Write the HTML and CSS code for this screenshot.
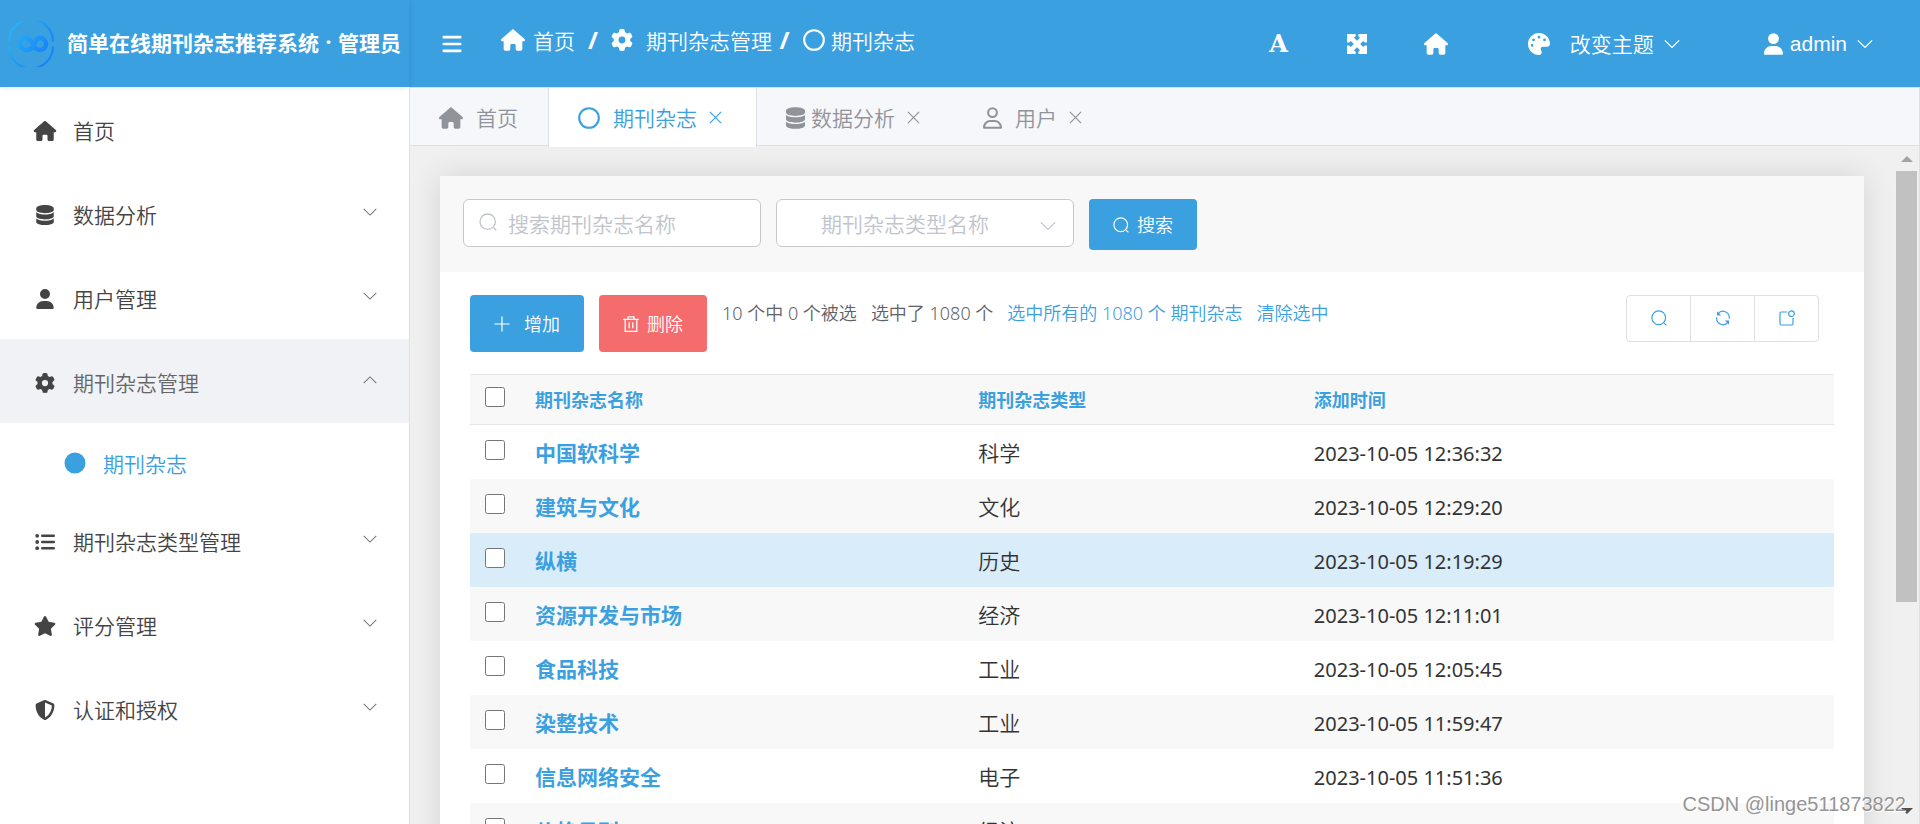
FILE: index.html
```html
<!DOCTYPE html>
<html lang="zh-CN">
<head>
<meta charset="utf-8">
<title>简单在线期刊杂志推荐系统</title>
<link rel="stylesheet" href="styles.css">
</head>
<body>
<svg class="sprite" aria-hidden="true">
  <symbol id="house" viewBox="0 0 576 512"><path d="M575.8 255.5c0 18-15 32.1-32 32.1h-32l.7 160.2c0 2.7-.2 5.4-.5 8.1V472c0 22.1-17.9 40-40 40H456c-1.1 0-2.2 0-3.3-.1c-1.4 .1-2.8 .1-4.2 .1H416 392c-22.1 0-40-17.9-40-40V448 384c0-17.7-14.3-32-32-32H256c-17.7 0-32 14.3-32 32v64 24c0 22.1-17.9 40-40 40H160 128.1c-1.5 0-3-.1-4.5-.2c-1.2 .1-2.4 .2-3.6 .2H104c-22.1 0-40-17.9-40-40V360c0-.9 0-1.9 .1-2.8V287.6H32c-18 0-32-14-32-32.1c0-9 3-17 10-24L266.4 8c7-7 15-8 22-8s15 2 21 7L564.8 231.5c8 7 12 15 11 24z"/></symbol>
  <symbol id="database" viewBox="0 0 448 512"><path d="M448 80v48c0 44.2-100.3 80-224 80S0 172.2 0 128V80C0 35.8 100.3 0 224 0S448 35.8 448 80zM393.2 214.7c20.8-7.4 39.9-16.9 54.8-28.6V288c0 44.2-100.3 80-224 80S0 332.2 0 288V186.1c14.9 11.8 34 21.2 54.8 28.6C99.7 230.7 159.5 240 224 240s124.3-9.3 169.2-25.3zM0 346.1c14.9 11.8 34 21.2 54.8 28.6C99.7 390.7 159.5 400 224 400s124.3-9.3 169.2-25.3c20.8-7.4 39.9-16.9 54.8-28.6V432c0 44.2-100.3 80-224 80S0 476.2 0 432V346.1z"/></symbol>
  <symbol id="user" viewBox="0 0 448 512"><path d="M224 256A128 128 0 1 0 224 0a128 128 0 1 0 0 256zm-45.7 48C79.8 304 0 383.8 0 482.3C0 498.7 13.3 512 29.7 512H418.3c16.4 0 29.7-13.3 29.7-29.7C448 383.8 368.2 304 269.7 304H178.3z"/></symbol>
  <symbol id="user-line" viewBox="0 0 448 512"><path d="M304 128a80 80 0 1 0 -160 0 80 80 0 1 0 160 0zM96 128a128 128 0 1 1 256 0A128 128 0 1 1 96 128zM49.3 464H398.7c-8.9-63.3-63.3-112-129-112H178.3c-65.7 0-120.1 48.7-129 112zM0 482.3C0 383.8 79.8 304 178.3 304h91.4C368.2 304 448 383.8 448 482.3c0 16.4-13.3 29.7-29.7 29.7H29.7C13.3 512 0 498.7 0 482.3z"/></symbol>
  <symbol id="gear" viewBox="0 0 512 512"><path d="M495.9 166.6c3.2 8.7 .5 18.4-6.4 24.6l-43.3 39.4c1.1 8.3 1.7 16.8 1.7 25.4s-.6 17.1-1.7 25.4l43.3 39.4c6.9 6.2 9.6 15.9 6.4 24.6c-4.4 11.9-9.7 23.3-15.8 34.3l-4.7 8.1c-6.6 11-14 21.4-22.1 31.2c-5.9 7.2-15.7 9.6-24.5 6.8l-55.7-17.7c-13.4 10.3-28.2 18.9-44 25.4l-12.5 57.1c-2 9.1-9 16.3-18.2 17.8c-13.8 2.3-28 3.5-42.5 3.5s-28.7-1.2-42.5-3.5c-9.2-1.5-16.2-8.7-18.2-17.8l-12.5-57.1c-15.8-6.5-30.6-15.1-44-25.4L83.1 425.9c-8.8 2.8-18.6 .3-24.5-6.8c-8.1-9.8-15.5-20.2-22.1-31.2l-4.7-8.1c-6.1-11-11.4-22.4-15.8-34.3c-3.2-8.7-.5-18.4 6.4-24.6l43.3-39.4C64.6 273.1 64 264.6 64 256s.6-17.1 1.7-25.4L22.4 191.2c-6.9-6.2-9.6-15.9-6.4-24.6c4.4-11.9 9.7-23.3 15.8-34.3l4.7-8.1c6.6-11 14-21.4 22.1-31.2c5.9-7.2 15.7-9.6 24.5-6.8l55.7 17.7c13.4-10.3 28.2-18.9 44-25.4l12.5-57.1c2-9.1 9-16.3 18.2-17.8C227.3 1.2 241.5 0 256 0s28.7 1.2 42.5 3.5c9.2 1.5 16.2 8.7 18.2 17.8l12.5 57.1c15.8 6.5 30.6 15.1 44 25.4l55.7-17.7c8.8-2.8 18.6-.3 24.5 6.8c8.1 9.8 15.5 20.2 22.1 31.2l4.7 8.1c6.1 11 11.4 22.4 15.8 34.3zM256 336a80 80 0 1 0 0-160 80 80 0 1 0 0 160z"/></symbol>
  <symbol id="star" viewBox="0 0 576 512"><path d="M316.9 18C311.6 7 300.4 0 288.1 0s-23.4 7-28.8 18L195 150.3 51.4 171.5c-12 1.8-22 10.2-25.7 21.7s-.7 24.2 7.9 32.7L137.8 329 113.2 474.7c-2 12 3 24.2 12.9 31.3s23 8 33.8 2.3l128.3-68.5 128.3 68.5c10.8 5.7 23.9 4.9 33.8-2.3s14.9-19.3 12.9-31.3L438.5 329 542.7 225.9c8.6-8.5 11.7-21.2 7.9-32.7s-13.7-19.9-25.7-21.7L381.2 150.3 316.9 18z"/></symbol>
  <symbol id="shield" viewBox="0 0 512 512"><path d="M256 0c4.6 0 9.2 1 13.4 2.9L457.7 82.8c22 9.3 38.4 31 38.3 57.2c-.5 99.2-41.3 280.7-213.6 363.2c-16.7 8-36.1 8-52.8 0C57.3 420.7 16.5 239.2 16 140c-.1-26.2 16.3-47.9 38.3-57.2L242.7 2.9C246.8 1 251.4 0 256 0zm0 66.8V444.8C394 378 431.1 230.1 432 141.4L256 66.8z"/></symbol>
  <symbol id="palette" viewBox="0 0 512 512"><path d="M512 256c0 .9 0 1.8 0 2.7c-.4 36.5-33.6 61.3-70.1 61.3H344c-26.5 0-48 21.5-48 48c0 3.4 .4 6.7 1 9.9c2.1 10.2 6.5 20 10.8 29.9c6.1 13.8 12.1 27.5 12.1 42c0 31.8-21.6 60.7-53.4 62c-3.5 .1-7 .2-10.6 .2C114.6 512 0 397.4 0 256S114.6 0 256 0S512 114.6 512 256zM128 288a32 32 0 1 0 -64 0 32 32 0 1 0 64 0zm0-96a32 32 0 1 0 0-64 32 32 0 1 0 0 64zM288 96a32 32 0 1 0 -64 0 32 32 0 1 0 64 0zm96 96a32 32 0 1 0 0-64 32 32 0 1 0 0 64z"/></symbol>
  <symbol id="list" viewBox="0 0 20 20"><circle cx="2.2" cy="3.8" r="1.9"/><circle cx="2.2" cy="10" r="1.9"/><circle cx="2.2" cy="16.2" r="1.9"/><path d="M7.2 3.8H18.8M7.2 10H18.8M7.2 16.2H18.8" fill="none" stroke="currentColor" stroke-width="2.4" stroke-linecap="round"/></symbol>
  <symbol id="bars" viewBox="0 0 20 20"><path d="M1.8 3.2H18.2M1.8 10H18.2M1.8 16.8H18.2" fill="none" stroke="currentColor" stroke-width="2.7" stroke-linecap="round"/></symbol>
  <symbol id="expand" viewBox="0 0 20 20"><path d="M0 0h8.6v2.2L7 3.8 10 6.8 13 3.8 11.400 2.200V0H20v8.600h-2.200L16.200 7l-3 3 3 3 1.600-1.600H20V20h-8.600v-2.200l1.600-1.600-3-3-3 3 1.600 1.600V20H0v-8.600h2.200L3.800 13l3-3-3-3-1.600 1.600H0z"/></symbol>
  <symbol id="ring" viewBox="0 0 22 22"><circle cx="11" cy="11" r="9.800" fill="none" stroke="currentColor" stroke-width="2.100"/></symbol>
  <symbol id="disc" viewBox="0 0 22 22"><circle cx="11" cy="11" r="10.500"/></symbol>
  <symbol id="chevron" viewBox="0 0 16 16"><path d="M.8 4.300 8 11.500l7.200-7.200" fill="none" stroke="currentColor" stroke-width="1.200"/></symbol>
  <symbol id="close" viewBox="0 0 14 14"><path d="M1 1l12 12M13 1 1 13" fill="none" stroke="currentColor" stroke-width="1.200"/></symbol>
  <symbol id="search" viewBox="0 0 18 18"><path d="M14.700 14.700 17.300 17.300M16.400 8.700a7.700 7.700 0 1 1-15.400 0 7.700 7.700 0 0 1 15.400 0z" fill="none" stroke="currentColor" stroke-width="1.300"/></symbol>
  <symbol id="plus" viewBox="0 0 16 16"><path d="M8 .5v15M.5 8h15" fill="none" stroke="currentColor" stroke-width="1.200"/></symbol>
  <symbol id="trash" viewBox="0 0 16 16"><path d="M.2 3.400h15.600M5 3.400V.9h6v2.500M2.200 3.400v12h11.600v-12M6.200 6.300v6M9.800 6.300v6" fill="none" stroke="currentColor" stroke-width="1.300"/></symbol>
  <symbol id="refresh" viewBox="0 0 16 16"><path d="M3 3.800a6.300 6.300 0 0 1 11.300 4.200v.8M13 12.200A6.300 6.300 0 0 1 1.700 8v-.8" fill="none" stroke="currentColor" stroke-width="1.200"/><path d="M2 1.200v4.200h4.200zM14 14.800v-4.200H9.800z"/></symbol>
  <symbol id="badge" viewBox="0 0 16 16"><path d="M8.500 2H2.200Q1 2 1 3.200v10.600Q1 15 2.200 15h10.600q1.200 0 1.200-1.200V8" fill="none" stroke="currentColor" stroke-width="1.200"/><circle cx="12.500" cy="3.700" r="2.800" fill="none" stroke="currentColor" stroke-width="1.200"/></symbol>
</svg>

<header class="topbar">
  <div class="brand">
    <svg class="logo" viewBox="0 0 46 46" aria-hidden="true">
      <defs><linearGradient id="lg" gradientUnits="userSpaceOnUse" x1="5" y1="10" x2="38" y2="32"><stop offset="0" stop-color="#1fb4fb"/><stop offset="1" stop-color="#1a82f7"/></linearGradient></defs>
      <g fill="none" stroke="url(#lg)">
        <path d="M1 20.500a22 22 0 0 1 44 0M1 25.500a22 22 0 0 0 44 0" stroke-width="2"/>
        <path d="M28 27.500C25 25 24 17 18 17a6 6 0 0 0 0 12c6 0 7-4 9-8 1.500-3 3.500-4 5-4a6 6 0 0 1 0 12c-2 0-3-.5-4-1.500" stroke-width="4.500"/>
      </g>
    </svg>
    <h1 class="brand-name">简单在线期刊杂志推荐系统<span class="dot">·</span>管理员</h1>
  </div>
  <button class="plain toggle" aria-label="折叠菜单"><svg class="ico i20"><use href="#bars"/></svg></button>
  <nav class="crumbs" aria-label="路径">
    <a href="#" class="crumb"><svg class="ico house"><use href="#house"/></svg>首页</a>
    <span class="slash">/</span>
    <a href="#" class="crumb wide"><svg class="ico i22"><use href="#gear"/></svg>期刊杂志管理</a>
    <span class="slash tight">/</span>
    <a href="#" class="crumb ringed"><svg class="ico i22"><use href="#ring"/></svg>期刊杂志</a>
  </nav>
  <div class="tools">
    <button class="plain font-tool" aria-label="字体">A</button>
    <button class="plain" aria-label="全屏"><svg class="ico i20"><use href="#expand"/></svg></button>
    <button class="plain" aria-label="首页"><svg class="ico house"><use href="#house"/></svg></button>
    <button class="plain theme"><svg class="ico i22"><use href="#palette"/></svg><span>改变主题</span><svg class="ico i16"><use href="#chevron"/></svg></button>
    <button class="plain account"><svg class="ico person"><use href="#user"/></svg><span>admin</span><svg class="ico i16"><use href="#chevron"/></svg></button>
  </div>
</header>

<div class="shell">
  <nav class="sidebar" aria-label="菜单">
    <a href="#" class="item"><svg class="ico side"><use href="#house"/></svg><span>首页</span></a>
    <button class="plain item"><svg class="ico side"><use href="#database"/></svg><span>数据分析</span><svg class="ico arrow"><use href="#chevron"/></svg></button>
    <button class="plain item"><svg class="ico side"><use href="#user"/></svg><span>用户管理</span><svg class="ico arrow"><use href="#chevron"/></svg></button>
    <button class="plain item open" aria-expanded="true"><svg class="ico side"><use href="#gear"/></svg><span>期刊杂志管理</span><svg class="ico arrow"><use href="#chevron"/></svg></button>
    <a href="#" class="sub"><svg class="ico i22"><use href="#disc"/></svg><span>期刊杂志</span></a>
    <button class="plain item"><svg class="ico side"><use href="#list"/></svg><span>期刊杂志类型管理</span><svg class="ico arrow"><use href="#chevron"/></svg></button>
    <button class="plain item"><svg class="ico side"><use href="#star"/></svg><span>评分管理</span><svg class="ico arrow"><use href="#chevron"/></svg></button>
    <button class="plain item"><svg class="ico side"><use href="#shield"/></svg><span>认证和授权</span><svg class="ico arrow"><use href="#chevron"/></svg></button>
  </nav>

  <main class="main">
    <div class="tabs">
      <a href="#" class="tab roomy"><svg class="ico house"><use href="#house"/></svg><span>首页</span></a>
      <a href="#" class="tab roomy active"><svg class="ico i22"><use href="#ring"/></svg><span>期刊杂志</span><svg class="ico x"><use href="#close"/></svg></a>
      <a href="#" class="tab"><svg class="ico person"><use href="#database"/></svg><span>数据分析</span><svg class="ico x"><use href="#close"/></svg></a>
      <a href="#" class="tab roomy"><svg class="ico person"><use href="#user-line"/></svg><span>用户</span><svg class="ico x"><use href="#close"/></svg></a>
    </div>
    <div class="view">
      <div class="page">
        <section class="card">
          <form class="filters">
            <div class="field"><svg class="ico i18 lead"><use href="#search"/></svg><input class="control" type="text" aria-label="搜索期刊杂志名称" placeholder="搜索期刊杂志名称"></div>
            <div class="field"><select class="control choice" aria-label="期刊杂志类型名称"><option>期刊杂志类型名称</option></select><svg class="ico i16 tail"><use href="#chevron"/></svg></div>
            <button type="button" class="btn find"><svg class="ico i16"><use href="#search"/></svg><span>搜索</span></button>
          </form>
          <div class="content">
            <div class="actions">
              <button class="btn add"><svg class="ico i16"><use href="#plus"/></svg><span>增加</span></button>
              <button class="btn del"><svg class="ico i16"><use href="#trash"/></svg><span>删除</span></button>
              <p class="counts"><span>10 个中 0 个被选</span><span>选中了 1080 个</span><a href="#">选中所有的 1080 个 期刊杂志</a><a href="#">清除选中</a></p>
              <div class="group">
                <button aria-label="搜索"><svg class="ico i16"><use href="#search"/></svg></button>
                <button aria-label="刷新"><svg class="ico i16"><use href="#refresh"/></svg></button>
                <button aria-label="新窗口"><svg class="ico i16"><use href="#badge"/></svg></button>
              </div>
            </div>
            <table class="grid">
              <colgroup><col class="c-check"><col class="c-name"><col class="c-type"><col></colgroup>
              <thead><tr><th><input type="checkbox" aria-label="全选"></th><th>期刊杂志名称</th><th>期刊杂志类型</th><th>添加时间</th></tr></thead>
              <tbody>
                <tr><td><input type="checkbox" aria-label="中国软科学"></td><td><a href="#">中国软科学</a></td><td>科学</td><td class="time">2023-10-05 12:36:32</td></tr>
                <tr><td><input type="checkbox" aria-label="建筑与文化"></td><td><a href="#">建筑与文化</a></td><td>文化</td><td class="time">2023-10-05 12:29:20</td></tr>
                <tr class="hover"><td><input type="checkbox" aria-label="纵横"></td><td><a href="#">纵横</a></td><td>历史</td><td class="time">2023-10-05 12:19:29</td></tr>
                <tr><td><input type="checkbox" aria-label="资源开发与市场"></td><td><a href="#">资源开发与市场</a></td><td>经济</td><td class="time">2023-10-05 12:11:01</td></tr>
                <tr><td><input type="checkbox" aria-label="食品科技"></td><td><a href="#">食品科技</a></td><td>工业</td><td class="time">2023-10-05 12:05:45</td></tr>
                <tr><td><input type="checkbox" aria-label="染整技术"></td><td><a href="#">染整技术</a></td><td>工业</td><td class="time">2023-10-05 11:59:47</td></tr>
                <tr><td><input type="checkbox" aria-label="信息网络安全"></td><td><a href="#">信息网络安全</a></td><td>电子</td><td class="time">2023-10-05 11:51:36</td></tr>
                <tr><td><input type="checkbox" aria-label="价格月刊"></td><td><a href="#">价格月刊</a></td><td>经济</td><td class="time"></td></tr>
              </tbody>
            </table>
          </div>
        </section>
      </div>
      <div class="scrollbar" aria-hidden="true">
        <i class="tri up"></i>
        <div class="track"><div class="thumb"></div></div>
        <i class="tri down"></i>
      </div>
    </div>
  </main>
</div>
<p class="watermark">CSDN @linge511873822</p>
</body>
</html>
```
FILE: styles.css
```css
:root {
  --blue: #3ba0df;
  --text: #444;
}
* { box-sizing: border-box; }
body {
  margin: 0;
  height: 100vh;
  display: flex;
  flex-direction: column;
  overflow: hidden;
  position: relative;
  background: #fff;
  color: var(--text);
  font: 350 21px/30px "Noto Sans CJK SC", sans-serif;
}
a { color: inherit; text-decoration: none; }
button, input, select { font: inherit; color: inherit; }
button { cursor: pointer; }
.sprite { display: none; }
.plain { border: 0; background: none; padding: 0; }
.ico { flex: none; fill: currentColor; display: block; }
.i16 { width: 16px; height: 16px; }
.i18 { width: 18px; height: 18px; }
.i20 { width: 20px; height: 20px; }
.i22 { width: 22px; height: 22px; }
.house { width: 24px; height: 22px; }
.person { width: 19px; height: 22px; }

/* Top bar */
.topbar {
  flex: none;
  height: 87px;
  display: flex;
  align-items: center;
  background: var(--blue);
  color: #fff;
}
.brand {
  width: 409px;
  height: 100%;
  display: flex;
  align-items: center;
  gap: 13px;
  padding-left: 8px;
  box-shadow: 0 0 6px rgba(0, 21, 41, .12);
}
.logo { width: 46px; height: 46px; flex: none; }
.brand-name {
  margin: 0;
  padding-bottom: 3px;
  font-size: 21px;
  font-weight: 700;
  white-space: nowrap;
  display: flex;
}
.dot { width: 19px; text-align: center; font-family: "Noto Sans", sans-serif; }
.toggle { margin-left: 33px; }
.crumbs {
  display: flex;
  align-items: center;
  margin-left: 39px;
  padding-bottom: 7px;
}
.crumb { display: flex; align-items: center; gap: 8px; }
.crumb.wide { gap: 13px; }
.crumb.ringed { gap: 6px; }
.slash { width: 36px; text-align: center; font: 700 24px/30px "Noto Sans", sans-serif; }
.slash.tight { width: 31px; padding-right: 6px; }
.tools {
  margin-left: auto;
  display: flex;
  align-items: center;
  padding-right: 47px;
  gap: 57px;
}
.font-tool { font: 700 24px/30px "DejaVu Serif", serif; margin-right: 2px; }
.theme, .account { display: flex; align-items: center; }
.theme { margin-left: 23px; gap: 10px; }
.theme .i22 { margin-right: 10px; }
.theme span { padding-bottom: 2px; }
.account { margin-left: 27px; gap: 10px; font-family: "Liberation Sans", sans-serif; font-weight: 400; }
.account .person { margin-right: -3px; }

/* Sidebar */
.shell { flex: 1; min-height: 0; display: flex; }
.sidebar {
  flex: none;
  width: 410px;
  border-right: 1px solid #dcdfe6;
  display: flex;
  flex-direction: column;
}
.item {
  height: 84px;
  display: flex;
  align-items: center;
  gap: 16px;
  padding: 4px 32px 0 33px;
  text-align: left;
}
.item span { padding-bottom: 2px; }
.item.open { background: #f0f2f6; color: #666; }
.item.open .side { color: var(--text); }
.side { width: 24px; height: 20px; }
.arrow { width: 14px; height: 14px; margin: 0 0 6px auto; color: #777; }
.open .arrow { transform: rotate(180deg); }
.sub {
  height: 75px;
  display: flex;
  align-items: center;
  gap: 17px;
  padding: 5px 0 0 64px;
  color: var(--blue);
}

/* Tabs */
.main { flex: 1; min-width: 0; display: flex; flex-direction: column; background: #f0f0f0; }
.tabs {
  flex: none;
  height: 59px;
  display: flex;
  background: #f5f7fb;
  border: solid #dcdfe6;
  border-width: 1px 1px 1px 0;
}
.tab {
  display: flex;
  align-items: center;
  gap: 6px;
  padding: 2px 34px 0 29px;
  color: #909399;
}
.tab span { padding-bottom: 2px; }
.tab.roomy { gap: 13px; }
.tab .x { width: 13px; height: 13px; margin-left: 6px; }
.tab.roomy .x { margin-left: -1px; }
.tab:first-child { padding-right: 30px; }
.tab.active {
  height: 59px;
  padding-bottom: 2px;
  background: #fff;
  color: var(--blue);
  border: solid #dcdfe6;
  border-width: 0 1px;
}

/* Scrolling view */
.view { flex: 1; min-height: 0; display: flex; border-right: 1px solid #dcdfe6; }
.page { flex: 1; min-width: 0; padding: 30px 32px 0 30px; overflow: hidden; }
.card { background: #fff; box-shadow: 0 0 30px rgba(0, 0, 0, .12); }
.scrollbar {
  flex: none;
  width: 23px;
  display: flex;
  flex-direction: column;
  align-items: center;
  padding: 10px 2px 10px 0;
}
.track { flex: 1; width: 100%; padding: 9px 0 12px; }
.thumb { height: 69%; background: #c1c1c1; }
.tri { border: 6px solid transparent; }
.tri.up { border-top: 0; border-bottom-color: #a3a3a3; }
.tri.down { border-bottom: 0; border-top-color: #505050; }

/* Filters */
.filters {
  display: flex;
  align-items: flex-start;
  gap: 15px;
  padding: 23px 23px 22px;
  background: #f8f8f8;
}
.field { position: relative; width: 298px; }
.control {
  display: block;
  width: 100%;
  height: 48px;
  border: 1px solid #c8c8c8;
  border-radius: 6px;
  background: #fff;
  padding: 0 16px 0 44px;
  outline: 0;
}
.control::placeholder { color: #c0c4cc; opacity: 1; }
.choice { appearance: none; color: #c0c4cc; }
.lead { position: absolute; left: 16px; top: 14px; color: #c0c4cc; }
.tail { position: absolute; right: 18px; top: 19px; color: #c0c4cc; }
.btn {
  display: flex;
  align-items: center;
  justify-content: center;
  border: 0;
  border-radius: 4px;
  background: var(--blue);
  color: #fff;
  font-size: 18px;
  gap: 8px;
  padding: 0 24px;
}
.btn span { padding-bottom: 2px; }
.find { height: 51px; }

/* Actions */
.content { padding: 23px 30px 0; }
.actions { display: flex; align-items: flex-start; gap: 15px; height: 79px; }
.actions .btn { height: 57px; }
.actions .add { gap: 14px; }
.actions .del { background: #f56c6c; }
.counts {
  flex: 1;
  margin: 0;
  padding-top: 3px;
  display: flex;
  gap: 14px;
  font-size: 18px;
  font-family: "Noto Sans", "Noto Sans CJK SC", sans-serif;
  color: #606266;
  white-space: nowrap;
}
.counts a { color: var(--blue); }
.group { display: flex; margin-right: 15px; }
.group button {
  width: 65px;
  height: 47px;
  margin-left: -1px;
  border: 1px solid #dcdfe6;
  background: #fff;
  color: var(--blue);
  display: flex;
  align-items: center;
  justify-content: center;
  padding: 0 0 1px;
}
.group button:first-child { border-radius: 4px 0 0 4px; }
.group button:last-child { border-radius: 0 4px 4px 0; }

/* Table */
.grid { width: 100%; table-layout: fixed; border-collapse: separate; border-spacing: 0; }
.c-check { width: 65px; }
.c-name { width: 32.5%; }
.c-type { width: 24.6%; }
.grid th {
  height: 51px;
  padding: 0 0 1px;
  border: solid #e6e6e6;
  border-width: 1px 0;
  background: #f8f8f8;
  color: var(--blue);
  text-align: left;
  font-size: 18px;
  line-height: 24px;
  font-weight: 700;
}
.grid td { height: 54px; padding: 0; color: #333; }
.grid td a { color: var(--blue); font-weight: 700; }
.grid tbody tr:nth-child(even) { background: #f8f8f8; }
.grid tbody tr.hover { background: #d9ecf9; }
.grid .time { padding-top: 3px; font: 400 20px/30px "Noto Sans", sans-serif; }
.grid input {
  display: block;
  width: 20px;
  height: 20px;
  margin: 0 0 4px 15px;
}

.watermark {
  position: absolute;
  right: 14px;
  bottom: 5px;
  margin: 0;
  font: 400 20px/30px "Liberation Sans", sans-serif;
  color: #959595;
  text-shadow: 1px 1px 0 #fff;
}
```
